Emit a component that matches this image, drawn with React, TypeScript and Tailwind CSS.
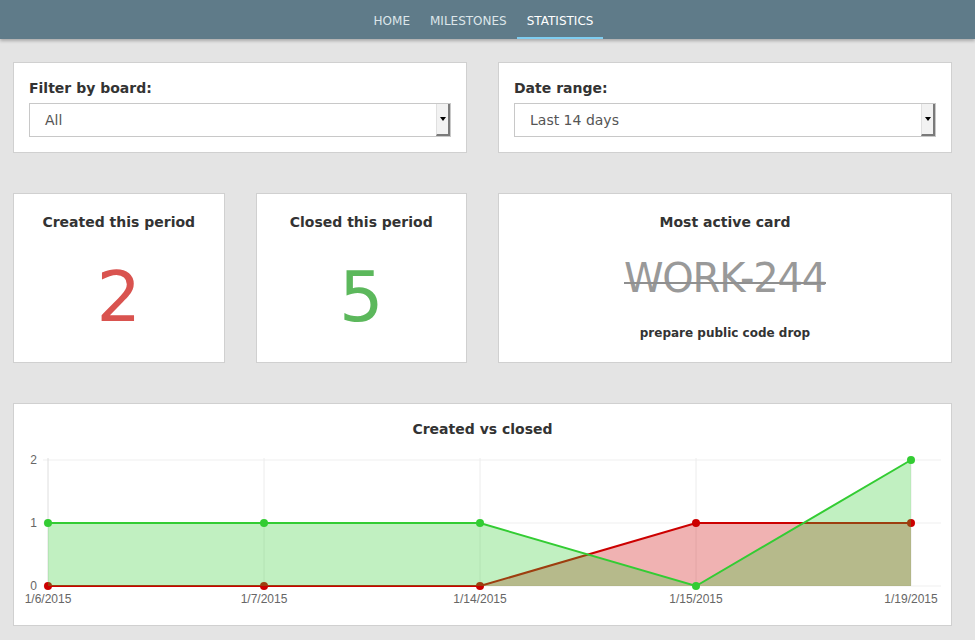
import React from "react";

const font = { fontFamily: '"DejaVu Sans", Verdana, sans-serif' };

function Select({ value }: { value: string }) {
  return (
    <div className="flex h-[34px] border border-[#c8c8c8] bg-white">
      <div className="flex-1 flex items-center pl-[15px] text-[14px] text-[#555]">{value}</div>
      <div className="w-[14px] flex items-center justify-center bg-[#f2f2f2] border-l border-[#e0e0e0] border-r-2 border-b-2 border-r-[#7a7a7a] border-b-[#7a7a7a]">
        <div className="w-0 h-0 border-l-[3px] border-r-[3px] border-t-[4px] border-l-transparent border-r-transparent border-t-black" />
      </div>
    </div>
  );
}

function Chart() {
  const xs = [34, 250, 466, 682, 897];
  const y = (v: number) => 141 - v * 63;
  const green = [1, 1, 1, 0, 2];
  const red = [0, 0, 0, 1, 1];
  const labels = ["1/6/2015", "1/7/2015", "1/14/2015", "1/15/2015", "1/19/2015"];
  const line = (d: number[]) => d.map((v, i) => `${i === 0 ? "M" : "L"}${xs[i]},${y(v)}`).join(" ");
  const area = (d: number[]) => `${line(d)} L${xs[4]},141 L${xs[0]},141 Z`;
  return (
    <svg width="937" height="175" className="block">
      {[0, 1, 2].map((v) => (
        <line key={v} x1={29} x2={927} y1={y(v)} y2={y(v)} stroke="#efefef" strokeWidth={1} />
      ))}
      {xs.map((x, i) => (
        <line key={i} x1={x} x2={x} y1={13} y2={141} stroke={i === 0 ? "#dedede" : "#ececec"} strokeWidth={1} />
      ))}
      {[0, 1, 2].map((v) => (
        <text key={v} x={23} y={y(v) + 4} textAnchor="end" fontSize={12} fill="#666" fontFamily='"Liberation Sans", Arial, sans-serif'>
          {v}
        </text>
      ))}
      {labels.map((l, i) => (
        <text key={l} x={xs[i]} y={158} textAnchor="middle" fontSize={12} fill="#666" fontFamily='"Liberation Sans", Arial, sans-serif'>
          {l}
        </text>
      ))}
      <path d={area(red)} fill="rgba(204,0,0,0.3)" />
      <path d={line(red)} fill="none" stroke="#cc0000" strokeWidth={2} />
      {red.map((v, i) => (
        <circle key={i} cx={xs[i]} cy={y(v)} r={4} fill="#cc0000" />
      ))}
      <path d={area(green)} fill="rgba(51,204,51,0.3)" />
      <path d={line(green)} fill="none" stroke="#33cc33" strokeWidth={2} />
      {green.map((v, i) => (
        <circle key={i} cx={xs[i]} cy={y(v)} r={4} fill="#33cc33" />
      ))}
    </svg>
  );
}

export default function App() {
  return (
    <div className="min-h-[640px] bg-[#e4e4e4] text-[#333]" style={font}>
      <nav className="h-[39px] bg-[#5f7b89] flex justify-center pr-[8px] shadow-[0_2px_3px_rgba(0,0,0,0.25)] relative">
        {[
          ["HOME", false],
          ["MILESTONES", false],
          ["STATISTICS", true],
        ].map(([t, a]) => (
          <div
            key={t as string}
            className={`px-[10px] flex items-center text-[12px] pt-[5px] border-b-2 ${a ? "border-[#7fcdf0] text-white" : "border-transparent text-[#dde6ea]"}`}
          >
            {t}
          </div>
        ))}
      </nav>
      <main className="pt-[23px] pl-[13px] pr-[23px] flex flex-col gap-[40px]">
        <div className="grid grid-cols-2 gap-[31px]">
          <div className="bg-white border border-[#d0d0d0] px-[15px] pt-[15px] pb-[15px]">
            <div className="text-[14px] font-bold leading-[20px] mb-[5px]">Filter by board:</div>
            <Select value="All" />
          </div>
          <div className="bg-white border border-[#d0d0d0] px-[15px] pt-[15px] pb-[15px]">
            <div className="text-[14px] font-bold leading-[20px] mb-[5px]">Date range:</div>
            <Select value="Last 14 days" />
          </div>
        </div>
        <div className="grid grid-cols-2 gap-[31px]">
          <div className="grid grid-cols-2 gap-[31px]">
            <div className="bg-white border border-[#d0d0d0] h-[170px] flex flex-col items-center pt-[18px]">
              <div className="text-[14px] font-bold leading-[20px]">Created this period</div>
              <div className="text-[70px] leading-[70px] mt-[30px] text-[#d9534f]">2</div>
            </div>
            <div className="bg-white border border-[#d0d0d0] h-[170px] flex flex-col items-center pt-[18px]">
              <div className="text-[14px] font-bold leading-[20px]">Closed this period</div>
              <div className="text-[70px] leading-[70px] mt-[30px] text-[#5cb85c]">5</div>
            </div>
          </div>
          <div className="bg-white border border-[#d0d0d0] h-[170px] flex flex-col items-center pt-[18px]">
            <div className="text-[14px] font-bold leading-[20px]">Most active card</div>
            <div className="relative text-[40px] leading-[40px] mt-[26px] text-[#999] tracking-[-1.2px]">
              WORK-244
              <div className="absolute left-0 right-0 top-[24px] h-[2px] bg-[#8f8f8f]" />
            </div>
            <div className="text-[12px] font-bold leading-[18px] mt-[26px]">prepare public code drop</div>
          </div>
        </div>
        <div className="bg-white border border-[#d0d0d0] h-[223px] flex flex-col items-center pt-[15px]">
          <div className="text-[14px] font-bold leading-[20px] mb-[6px]">Created vs closed</div>
          <Chart />
        </div>
      </main>
    </div>
  );
}
